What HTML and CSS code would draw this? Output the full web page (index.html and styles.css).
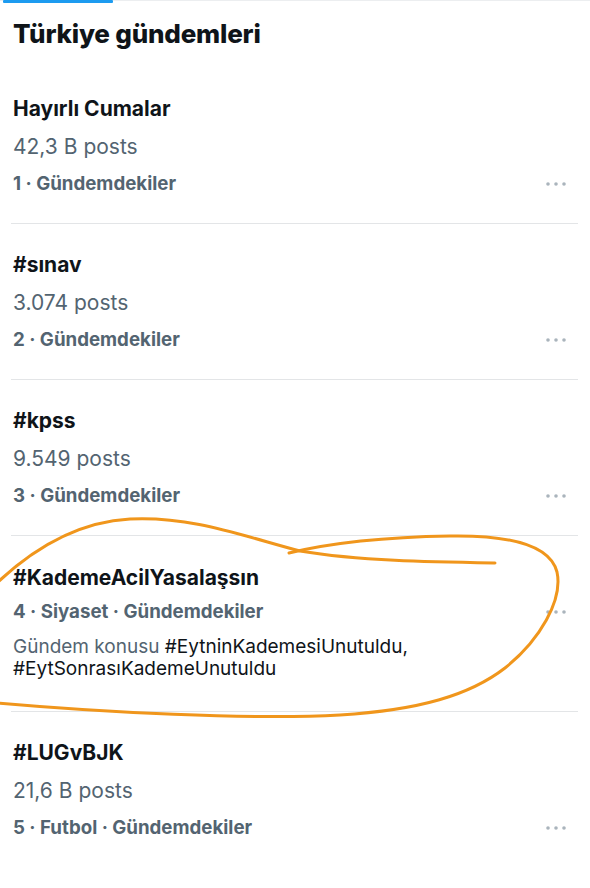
FILE: index.html
```html
<!DOCTYPE html>
<html lang="tr">
<head>
<meta charset="utf-8">
<title>Türkiye gündemleri</title>
<link rel="stylesheet" href="styles.css">
</head>
<body>
<div class="page">
  <div class="tabs"><div class="tab-active"></div></div>
  <h1 class="header">Türkiye gündemleri</h1>
  <ul class="list">
    <li class="item">
      <div class="title">Hayırlı Cumalar</div>
      <div class="posts">42,3 B posts</div>
      <div class="meta"><span>1 · Gündemdekiler</span><svg class="dots" width="20" height="4" viewBox="0 0 20 4"><circle cx="2" cy="2" r="1.8"/><circle cx="10" cy="2" r="1.8"/><circle cx="18" cy="2" r="1.8"/></svg></div>
    </li>
    <li class="item">
      <div class="title">#sınav</div>
      <div class="posts">3.074 posts</div>
      <div class="meta"><span>2 · Gündemdekiler</span><svg class="dots" width="20" height="4" viewBox="0 0 20 4"><circle cx="2" cy="2" r="1.8"/><circle cx="10" cy="2" r="1.8"/><circle cx="18" cy="2" r="1.8"/></svg></div>
    </li>
    <li class="item">
      <div class="title">#kpss</div>
      <div class="posts">9.549 posts</div>
      <div class="meta"><span>3 · Gündemdekiler</span><svg class="dots" width="20" height="4" viewBox="0 0 20 4"><circle cx="2" cy="2" r="1.8"/><circle cx="10" cy="2" r="1.8"/><circle cx="18" cy="2" r="1.8"/></svg></div>
    </li>
    <li class="item item-desc">
      <div class="title">#KademeAcilYasalaşsın</div>
      <div class="meta meta-tight"><span>4 · Siyaset · Gündemdekiler</span><svg class="dots" width="20" height="4" viewBox="0 0 20 4"><circle cx="2" cy="2" r="1.8"/><circle cx="10" cy="2" r="1.8"/><circle cx="18" cy="2" r="1.8"/></svg></div>
      <div class="desc"><span class="muted">Gündem konusu</span> #EytninKademesiUnutuldu,<br>#EytSonrasıKademeUnutuldu</div>
    </li>
    <li class="item">
      <div class="title">#LUGvBJK</div>
      <div class="posts">21,6 B posts</div>
      <div class="meta"><span>5 · Futbol · Gündemdekiler</span><svg class="dots" width="20" height="4" viewBox="0 0 20 4"><circle cx="2" cy="2" r="1.8"/><circle cx="10" cy="2" r="1.8"/><circle cx="18" cy="2" r="1.8"/></svg></div>
    </li>
  </ul>
  <svg class="annotation" width="590" height="888" viewBox="0 0 590 888">
    <path d="M -2,582 C 30,552 75,522 130,519 C 190,516 240,535 300,551 C 360,561 430,562 495,563"/>
    <path d="M 289,553 C 330,543 390,537 450,536 C 510,535 550,545 557,572 C 563,600 540,640 505,668 C 470,695 420,710 340,715 C 250,720 100,712 -2,703"/>
  </svg>
</div>
</body>
</html>
```
FILE: styles.css
```css
html, body {
  margin: 0;
  padding: 0;
  background: #ffffff;
}
body {
  font-family: Inter, "Noto Sans", "DejaVu Sans", sans-serif;
  color: #0f1419;
  overflow: hidden;
}
.page {
  position: relative;
  width: 590px;
  height: 888px;
  overflow: hidden;
}
.tabs {
  height: 2px;
  border-top: 1px solid #eceef0;
  box-sizing: border-box;
  position: relative;
}
.tab-active {
  position: absolute;
  left: 3px;
  top: -1px;
  width: 110px;
  height: 3px;
  background: #1d9bf0;
  border-radius: 1px;
}
.header {
  margin: 16px 0 18px 13px;
  font-size: 26px;
  line-height: 32px;
  font-weight: 800;
  letter-spacing: -0.2px;
}
.list {
  list-style: none;
  margin: 0;
  padding: 0 12px 0 11px;
}
.item {
  padding: 29px 12px 27px 2px;
  border-bottom: 1px solid #e3e5e7;
}
.item:last-child {
  border-bottom: none;
}
.title {
  font-size: 21px;
  line-height: 24px;
  font-weight: 700;
}
.posts {
  margin-top: 14px;
  font-size: 21px;
  line-height: 24px;
  color: #536471;
}
.meta {
  margin-top: 13px;
  font-size: 18.7px;
  line-height: 24px;
  font-weight: 700;
  color: #536471;
  display: flex;
  justify-content: space-between;
  align-items: center;
}
.meta-tight {
  margin-top: 10px;
}
.dots {
  fill: #aab4bc;
}
.item-desc {
  padding-top: 30px;
  padding-bottom: 31px;
}
.desc {
  margin-top: 12px;
  font-size: 19px;
  line-height: 22px;
  color: #0f1419;
}
.muted {
  color: #536471;
}
.annotation {
  position: absolute;
  left: 0;
  top: 0;
  pointer-events: none;
  fill: none;
  stroke: #f0961c;
  stroke-width: 3;
  stroke-linecap: round;
  stroke-linejoin: round;
}
```
